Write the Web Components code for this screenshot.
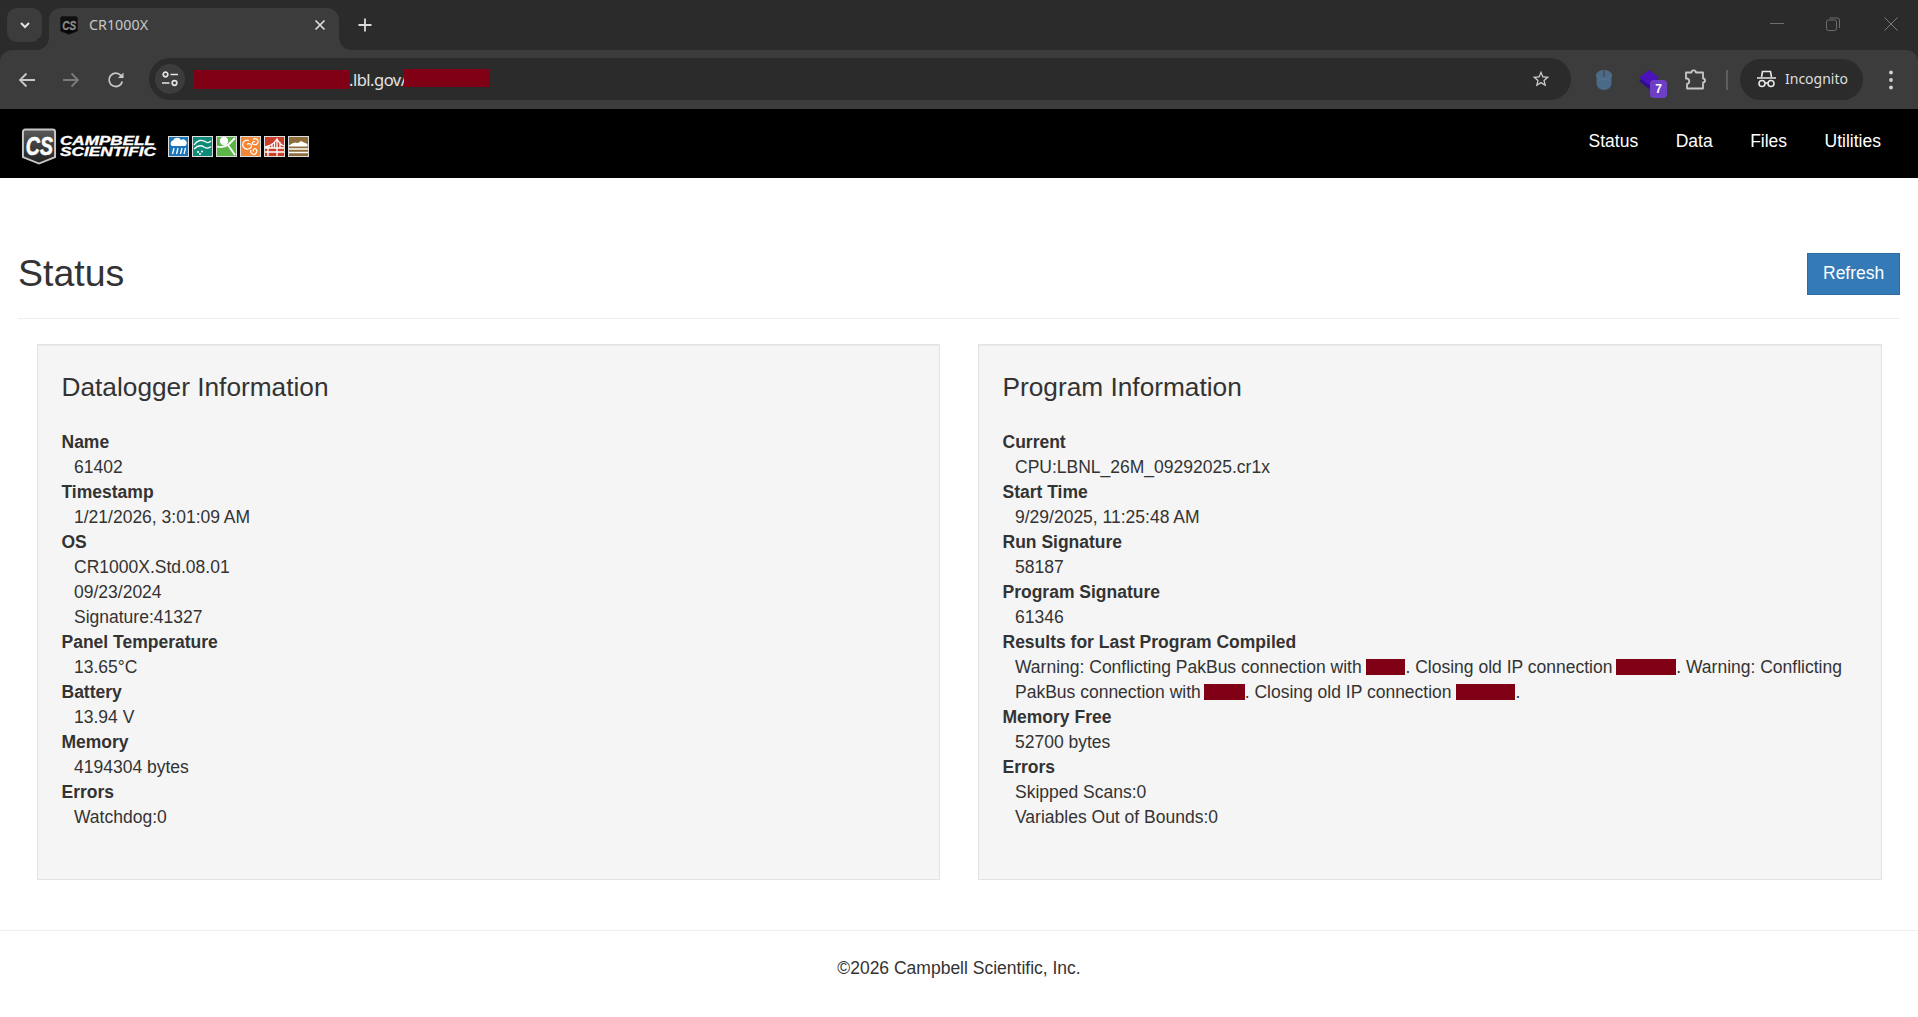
<!DOCTYPE html>
<html>
<head>
<meta charset="utf-8">
<title>CR1000X</title>
<style>
  html, body { margin: 0; padding: 0; height: 100%; background: #fff; overflow: hidden; }
  body { font-family: "Liberation Sans", Arial, sans-serif; font-size: 17.5px; line-height: 25px; color: #333; }
</style>
</head>
<body>

<browser-tabstrip title-text="CR1000X"></browser-tabstrip>
<browser-toolbar></browser-toolbar>

<site-navbar>
  <nav-link>Status</nav-link>
  <nav-link>Data</nav-link>
  <nav-link>Files</nav-link>
  <nav-link>Utilities</nav-link>
</site-navbar>

<page-header heading="Status"></page-header>

<well-row>
  <info-well heading="Datalogger Information">
    <info-item label="Name"><div>61402</div></info-item>
    <info-item label="Timestamp"><div>1/21/2026, 3:01:09 AM</div></info-item>
    <info-item label="OS"><div>CR1000X.Std.08.01</div><div>09/23/2024</div><div>Signature:41327</div></info-item>
    <info-item label="Panel Temperature"><div>13.65°C</div></info-item>
    <info-item label="Battery"><div>13.94 V</div></info-item>
    <info-item label="Memory"><div>4194304 bytes</div></info-item>
    <info-item label="Errors"><div>Watchdog:0</div></info-item>
  </info-well>
  <info-well heading="Program Information">
    <info-item label="Current"><div>CPU:LBNL_26M_09292025.cr1x</div></info-item>
    <info-item label="Start Time"><div>9/29/2025, 11:25:48 AM</div></info-item>
    <info-item label="Run Signature"><div>58187</div></info-item>
    <info-item label="Program Signature"><div>61346</div></info-item>
    <info-item label="Results for Last Program Compiled"><div>Warning: Conflicting PakBus connection with <red-act w="39"></red-act>. Closing old IP connection <red-act w="60" style="margin-left:-1px"></red-act>. Warning: Conflicting<br>PakBus connection with <red-act w="41" style="margin-left:-2px"></red-act>. Closing old IP connection <red-act w="59"></red-act>.</div></info-item>
    <info-item label="Memory Free"><div>52700 bytes</div></info-item>
    <info-item label="Errors"><div>Skipped Scans:0</div><div>Variables Out of Bounds:0</div></info-item>
  </info-well>
</well-row>

<site-footer>©2026 Campbell Scientific, Inc.</site-footer>

<script>
// small favicon / logo shield, shared by the tab and the navbar
function shield(w, h, stroke, top, bottom, letter) {
  return `<svg width="${w}" height="${h}" viewBox="0 0 36 38" style="display:block;flex:none">
    <defs><linearGradient id="sh" x1="0" y1="0" x2="0" y2="1"><stop offset="0" stop-color="${top}"/><stop offset="1" stop-color="${bottom}"/></linearGradient></defs>
    <path d="M4 1.500h28a2.500 2.500 0 0 1 2.500 2.500v26l-16.500 6.500-16.500-6.500V4A2.500 2.500 0 0 1 4 1.500z" fill="url(#sh)" stroke="${stroke}" stroke-width="2"/>
    <text transform="translate(4.500 28) scale(1 1.300)" font-family="Liberation Sans" font-weight="700" font-style="italic" font-size="20" fill="${letter}" stroke="${letter}" stroke-width=".5">CS</text>
  </svg>`;
}

class BrowserTabstrip extends HTMLElement {
  constructor() {
    super();
    this.attachShadow({ mode: 'open' });
    this.shadowRoot.innerHTML = `<style>
      :host { display: flex; height: 62px; margin-bottom: -12px; background: #2b2b2b; align-items: flex-start; position: relative;
        font-family: "Noto Sans", "Open Sans", sans-serif; color: #c7c7c7; }
      .search { width: 35px; height: 34px; margin: 8px 0 0 7px; border-radius: 10px; background: #3c3c3c; display: flex; align-items: center; justify-content: center; }
      .tab { width: 290px; height: 42px; margin: 8px 0 0 7px; background: #3c3c3c; border-radius: 12px 12px 0 0; display: flex; align-items: center; padding: 0 12px 8px 11px; box-sizing: border-box; position: relative; }
      .tab::before, .tab::after { content: ""; position: absolute; bottom: 0; width: 12px; height: 12px; }
      .tab::before { left: -12px; background: radial-gradient(circle at 0 0, #2b2b2b 11.500px, #3c3c3c 12px); }
      .tab::after { right: -12px; background: radial-gradient(circle at 100% 0, #2b2b2b 11.500px, #3c3c3c 12px); }
      .tab .name { font-size: 14.300px; margin-left: 11px; flex: 1; line-height: 20px; }
      .plus { margin: 16px 0 0 17px; display: block; }
      .winctl { margin-left: auto; display: flex; align-items: center; gap: 43px; padding: 17px 20px 0 0; }
      .winctl svg:nth-child(2) { margin: 0 1px 0 -1px; }
      svg { display: block; flex: none; }
    </style>
    <div class="search"><svg width="14" height="14" viewBox="0 0 14 14"><path d="M3 5l4 4 4-4" fill="none" stroke="#e3e3e3" stroke-width="2"/></svg></div>
    <div class="tab">
      ${shield(18, 19, '#161616', '#111', '#050505', '#8c8c8c')}
      <span class="name">${this.getAttribute('title-text')}</span>
      <svg width="14" height="14" viewBox="0 0 14 14"><path d="M2.500 2.500l9 9M11.500 2.500l-9 9" stroke="#dcdcdc" stroke-width="1.700"/></svg>
    </div>
    <svg class="plus" width="18" height="18" viewBox="0 0 18 18"><path d="M9 2.500v13M2.500 9h13" stroke="#dcdcdc" stroke-width="1.800"/></svg>
    <div class="winctl">
      <svg width="14" height="14" viewBox="0 0 14 14"><path d="M0 6.500h14" stroke="#6e6e6e" stroke-width="1"/></svg>
      <svg width="14" height="14" viewBox="0 0 14 14"><rect x=".5" y="3" width="10" height="10.500" rx="2" fill="none" stroke="#6e6e6e"/><path d="M3.500 1h8a2 2 0 0 1 2 2v8" fill="none" stroke="#6e6e6e"/></svg>
      <svg width="14" height="14" viewBox="0 0 14 14"><path d="M.5.5l13 13M13.500.5l-13 13" stroke="#7c7c7c" stroke-width="1"/></svg>
    </div>`;
  }
}

class BrowserToolbar extends HTMLElement {
  constructor() {
    super();
    this.attachShadow({ mode: 'open' });
    this.shadowRoot.innerHTML = `<style>
      :host { display: flex; height: 59px; background: #3c3c3c; align-items: center; border-radius: 12px 12px 0 0; position: relative; font-family: "Noto Sans", "Open Sans", sans-serif; }
      svg { display: block; flex: none; }
      .nav { display: flex; align-items: center; gap: 24px; padding-left: 17px; }
      .nav svg:nth-child(3) { margin-left: 1px; }
      .omni { margin-left: 23px; width: 1422px; height: 42px; margin-top: -1px; border-radius: 21px; background: #2b2b2b; display: flex; align-items: center; flex: none; position: relative; }
      .tune { width: 30px; height: 30px; margin-left: 6px; border-radius: 50%; background: #3c3c3c; display: flex; align-items: center; justify-content: center; flex: none; }
      .url { margin-left: 9px; font-size: 16.500px; color: #e3e3e3; font-family: "Noto Sans", sans-serif; letter-spacing: -.5px; display: flex; align-items: center; white-space: nowrap; }
      .mask { display: block; background: #800015; flex: none; }
      .star { position: absolute; right: 20px; top: 11px; }
      .ext { display: flex; align-items: center; margin-left: 25px; }
      .mouse { margin-right: 26px; }
      .stack { position: relative; width: 22px; height: 22px; margin-right: 24px; }
      .badge { position: absolute; left: 12px; top: 11px; width: 17px; height: 18px; border-radius: 4px; background: #6d3fc6; color: #fff; font: 700 12px/18px "Liberation Sans", sans-serif; text-align: center; }
      .sep { width: 2px; height: 20px; background: #5e5e5e; margin: 0 12px 0 20px; }
      .pill { width: 123px; height: 41px; margin-top: -1px; border-radius: 21px; background: #2b2b2b; display: flex; align-items: center; padding-left: 17px; box-sizing: border-box; color: #dedede; font-size: 14px; gap: 9px; flex: none; }
      .pill span { padding-bottom: 2px; }
      .kebab { margin-left: 25px; }
    </style>
    <div class="nav">
      <svg width="20" height="20" viewBox="0 0 20 20"><path d="M18 10H3M9.500 3.500L3 10l6.500 6.500" fill="none" stroke="#c7c7c7" stroke-width="1.800"/></svg>
      <svg width="20" height="20" viewBox="0 0 20 20"><path d="M2 10h15M10.500 3.500L17 10l-6.500 6.500" fill="none" stroke="#7b7b7b" stroke-width="1.800"/></svg>
      <svg width="20" height="20" viewBox="0 0 20 20"><path d="M16.300 11.500A6.700 6.700 0 1 1 14.800 5.300L17 7.500" fill="none" stroke="#c7c7c7" stroke-width="1.800"/><path d="M17.500 2.500V8H12z" fill="#c7c7c7"/></svg>
    </div>
    <div class="omni">
      <div class="tune"><svg width="18" height="18" viewBox="0 0 18 18" fill="none" stroke="#e3e3e3" stroke-width="1.700"><circle cx="4.500" cy="4.500" r="2.300"/><path d="M9.500 4.500H17M1 13h7.500"/><circle cx="13.500" cy="13" r="2.300"/></svg></div>
      <div class="url"><span class="mask" style="width:155px;height:19px"></span><span>.lbl.gov/</span><span class="mask" style="width:86px;height:18px;margin:-2px 0 0 -2px"></span></div>
      <svg class="star" width="20" height="20" viewBox="0 0 24 24"><path fill="#c7c7c7" d="M22 9.240l-7.190-.62L12 2 9.190 8.630 2 9.240l5.460 4.730L5.820 21 12 17.270 18.180 21l-1.630-7.030L22 9.240zM12 15.400l-3.760 2.270 1-4.280-3.320-2.880 4.380-.38L12 6.100l1.710 4.040 4.380.38-3.320 2.880 1 4.280L12 15.400z"/></svg>
    </div>
    <div class="ext">
      <svg class="mouse" width="16" height="20" viewBox="0 0 16 20"><path d="M.5 5v9a7.500 6 0 0 0 15 0V5z" fill="#4a6a88"/><ellipse cx="8" cy="5" rx="7.500" ry="4.500" fill="#4a6a88" stroke="#5c7c9a" stroke-width=".6"/><path d="M8 .5v6" stroke="#3c3c3c" stroke-width="1"/></svg>
      <div class="stack">
        <svg width="22" height="22" viewBox="0 0 22 22"><path d="M1 12l10-7 10 7-10 8z" fill="#2d0f8f"/><path d="M1 8.500L11 1l10 7.500L11 16z" fill="#4a12b8"/></svg>
        <span class="badge">7</span>
      </div>
      <svg width="22" height="22" viewBox="0 0 22 22"><path d="M2 3.500h5.500a2.200 2.200 0 0 1 4.400 0H19v6a2 2 0 0 1 0 4v6H3v-4.500a2.800 2.800 0 0 0 0-5.500H2z" fill="none" stroke="#c7c7c7" stroke-width="1.800" stroke-linejoin="round"/></svg>
      <div class="sep"></div>
      <div class="pill">
        <svg width="19" height="18" viewBox="0 0 19 18" fill="none" stroke="#e6e6e6" stroke-width="1.600"><path d="M4.500 7l1-5.500h8l1 5.500M0 8h19" /><circle cx="5" cy="13.500" r="3"/><circle cx="14" cy="13.500" r="3"/><path d="M8 13h3"/></svg>
        <span>Incognito</span>
      </div>
      <svg class="kebab" width="6" height="20" viewBox="0 0 6 20"><circle cx="3" cy="2.500" r="1.900" fill="#d0d0d0"/><circle cx="3" cy="10" r="1.900" fill="#d0d0d0"/><circle cx="3" cy="17.500" r="1.900" fill="#d0d0d0"/></svg>
    </div>`;
  }
}

class SiteNavbar extends HTMLElement {
  constructor() {
    super();
    this.attachShadow({ mode: 'open' });
    this.shadowRoot.innerHTML = `<style>
      :host { display: flex; height: 69px; background: #000; align-items: center; justify-content: space-between; padding: 0 37px 0 21px; }
      .brand { display: flex; align-items: center; margin-top: 5px; }
      .word { margin-left: 3px; display: block; }
      .icons { display: flex; gap: 3px; margin-left: 11px; }
      svg { display: block; }
      .links { display: flex; gap: 37.500px; margin-top: -5px; }
      .logo-text { font-family: "Liberation Sans", sans-serif; font-weight: 700; font-style: italic; font-size: 13px; fill: #fff; stroke: #fff; stroke-width: .35; }
    </style>
    <div class="brand">
      ${shield(36, 37, '#c8c8c8', '#5a5a5a', '#222', '#fff')}
      <svg class="word" width="97" height="24" viewBox="0 0 97 24">
        <text class="logo-text" x="0" y="11" textLength="95" lengthAdjust="spacingAndGlyphs">CAMPBELL</text>
        <text class="logo-text" x="0" y="22" textLength="96" lengthAdjust="spacingAndGlyphs">SCIENTIFIC</text>
      </svg>
      <div class="icons">
        <svg width="21" height="21" viewBox="0 0 21 21"><rect x=".5" y=".5" width="20" height="20" fill="#1b75bb" stroke="#ddd"/><path d="M4 10a3 3 0 0 1 1-5.500 4.500 4.500 0 0 1 8-.5 3.500 3.500 0 0 1 4 6z" fill="#fff"/><path d="M6 12l-1.500 6M10 12l-1.500 6M14 12l-1.500 6M17.500 12l-1.500 6" stroke="#fff" stroke-width="1.300"/></svg>
        <svg width="21" height="21" viewBox="0 0 21 21"><rect x=".5" y=".5" width="20" height="20" fill="#0e8a78" stroke="#ddd"/><path d="M2 9c3-5 8-6 12-3 1.500 1 3 1 5-1M2 13c4-4 7-4 10-2 2.500 1.500 5 1.500 7-.5" fill="none" stroke="#fff" stroke-width="1.300"/><circle cx="6" cy="16" r="1" fill="#fff"/><circle cx="10" cy="15.500" r="1" fill="#fff"/><circle cx="8" cy="18" r="1" fill="#fff"/></svg>
        <svg width="21" height="21" viewBox="0 0 21 21"><rect x=".5" y=".5" width="20" height="20" fill="#5cb547" stroke="#ddd"/><circle cx="8" cy="5" r="4.200" fill="#fff"/><path d="M1 10.500c5 1.500 9 0 12-2.500l6-6M12 9l7 10" fill="none" stroke="#fff" stroke-width="1.800"/></svg>
        <svg width="21" height="21" viewBox="0 0 21 21"><rect x=".5" y=".5" width="20" height="20" fill="#f58634" stroke="#ddd"/><path d="M9 4.500a4.500 4.500 0 1 0 .5 8 2.500 2.500 0 1 0-2.500-4M13 3.500a3 3 0 1 1 1 5 1.500 1.500 0 1 1 1-2.500M11 14a3 3 0 1 0 4-1.500 2 2 0 0 0-1.500 3" fill="none" stroke="#fff" stroke-width="1.200"/></svg>
        <svg width="21" height="21" viewBox="0 0 21 21"><rect x=".5" y=".5" width="20" height="20" fill="#c8402a" stroke="#ddd"/><path d="M1 12h19M1 16h19M13 3v17M4 12v8M1 11c5-1 9-3 12-8 1.500 3 4 6 7 7M5 12V9M8 12V7.500M10.500 12V5.500M16 12V6" fill="none" stroke="#fff" stroke-width="1.300"/></svg>
        <svg width="21" height="21" viewBox="0 0 21 21"><rect x=".5" y=".5" width="20" height="20" fill="#8f6d3b" stroke="#ddd"/><path d="M1 9.500l3-2 3-1 3 .5 3-2 3 1.500 3.500 1.500v2.500H1z" fill="#fff"/><path d="M1 13h19M1 16.500h19" stroke="#fff" stroke-width="1.500"/></svg>
      </div>
    </div>
    <div class="links"><slot></slot></div>`;
  }
}

class NavLink extends HTMLElement {
  constructor() {
    super();
    this.attachShadow({ mode: 'open' });
    this.shadowRoot.innerHTML = `<style>
      :host { display: block; color: #fff; font-size: 17.500px; line-height: 25px; }
    </style><slot></slot>`;
  }
}

class PageHeader extends HTMLElement {
  constructor() {
    super();
    this.attachShadow({ mode: 'open' });
    this.shadowRoot.innerHTML = `<style>
      :host { display: flex; justify-content: space-between; align-items: center; margin: 75px 18px 0; padding-bottom: 23px; border-bottom: 1px solid #eee; }
      h1 { margin: -2px 0 0; font-size: 37.500px; font-weight: 400; line-height: 41px; color: #333; }
      button { font: 17.500px/25px "Liberation Sans", sans-serif; color: #fff; background: #337ab7; border: 1px solid #2e6da4; padding: 6px 15px 7px; height: 42px; width: 93px; box-sizing: border-box; border-radius: 0; }
    </style>
    <h1>${this.getAttribute('heading')}</h1>
    <button>Refresh</button>`;
  }
}

class WellRow extends HTMLElement {
  constructor() {
    super();
    this.attachShadow({ mode: 'open' });
    this.shadowRoot.innerHTML = `<style>
      :host { display: grid; grid-template-columns: 903px 904px; gap: 38px; padding: 0 36px 0 37px; margin-top: 25px; }
    </style><slot></slot>`;
  }
}

class InfoWell extends HTMLElement {
  constructor() {
    super();
    this.attachShadow({ mode: 'open' });
    this.shadowRoot.innerHTML = `<style>
      :host { display: block; background: #f5f5f5; border: 1px solid #e3e3e3; box-shadow: inset 0 1px 1px rgba(0,0,0,.05); padding: 25px 24px 49px 23.500px; height: 536px; box-sizing: border-box; min-width: 0; }
      h3 { margin: 0 0 26px; font-size: 26.250px; font-weight: 400; line-height: 34px; color: #333; }
    </style>
    <h3>${this.getAttribute('heading')}</h3>
    <slot></slot>`;
  }
}

class InfoItem extends HTMLElement {
  constructor() {
    super();
    this.attachShadow({ mode: 'open' });
    this.shadowRoot.innerHTML = `<style>
      :host { display: block; }
      .label { font-weight: 700; }
      ::slotted(div) { margin-left: 12.500px; }
    </style>
    <div class="label">${this.getAttribute('label')}</div>
    <slot></slot>`;
  }
}

class RedAct extends HTMLElement {
  constructor() {
    super();
    this.attachShadow({ mode: 'open' });
    this.shadowRoot.innerHTML = `<style>
      :host { display: inline-block; height: 16px; background: #800015; vertical-align: -2px; }
    </style>`;
    this.style.width = this.getAttribute('w') + 'px';
  }
}

class SiteFooter extends HTMLElement {
  constructor() {
    super();
    this.attachShadow({ mode: 'open' });
    this.shadowRoot.innerHTML = `<style>
      :host { display: block; margin-top: 50px; border-top: 1px solid #eee; padding-top: 25px; text-align: center; }
    </style><slot></slot>`;
  }
}

customElements.define('browser-tabstrip', BrowserTabstrip);
customElements.define('browser-toolbar', BrowserToolbar);
customElements.define('site-navbar', SiteNavbar);
customElements.define('nav-link', NavLink);
customElements.define('page-header', PageHeader);
customElements.define('well-row', WellRow);
customElements.define('info-well', InfoWell);
customElements.define('info-item', InfoItem);
customElements.define('red-act', RedAct);
customElements.define('site-footer', SiteFooter);
</script>
</body>
</html>
